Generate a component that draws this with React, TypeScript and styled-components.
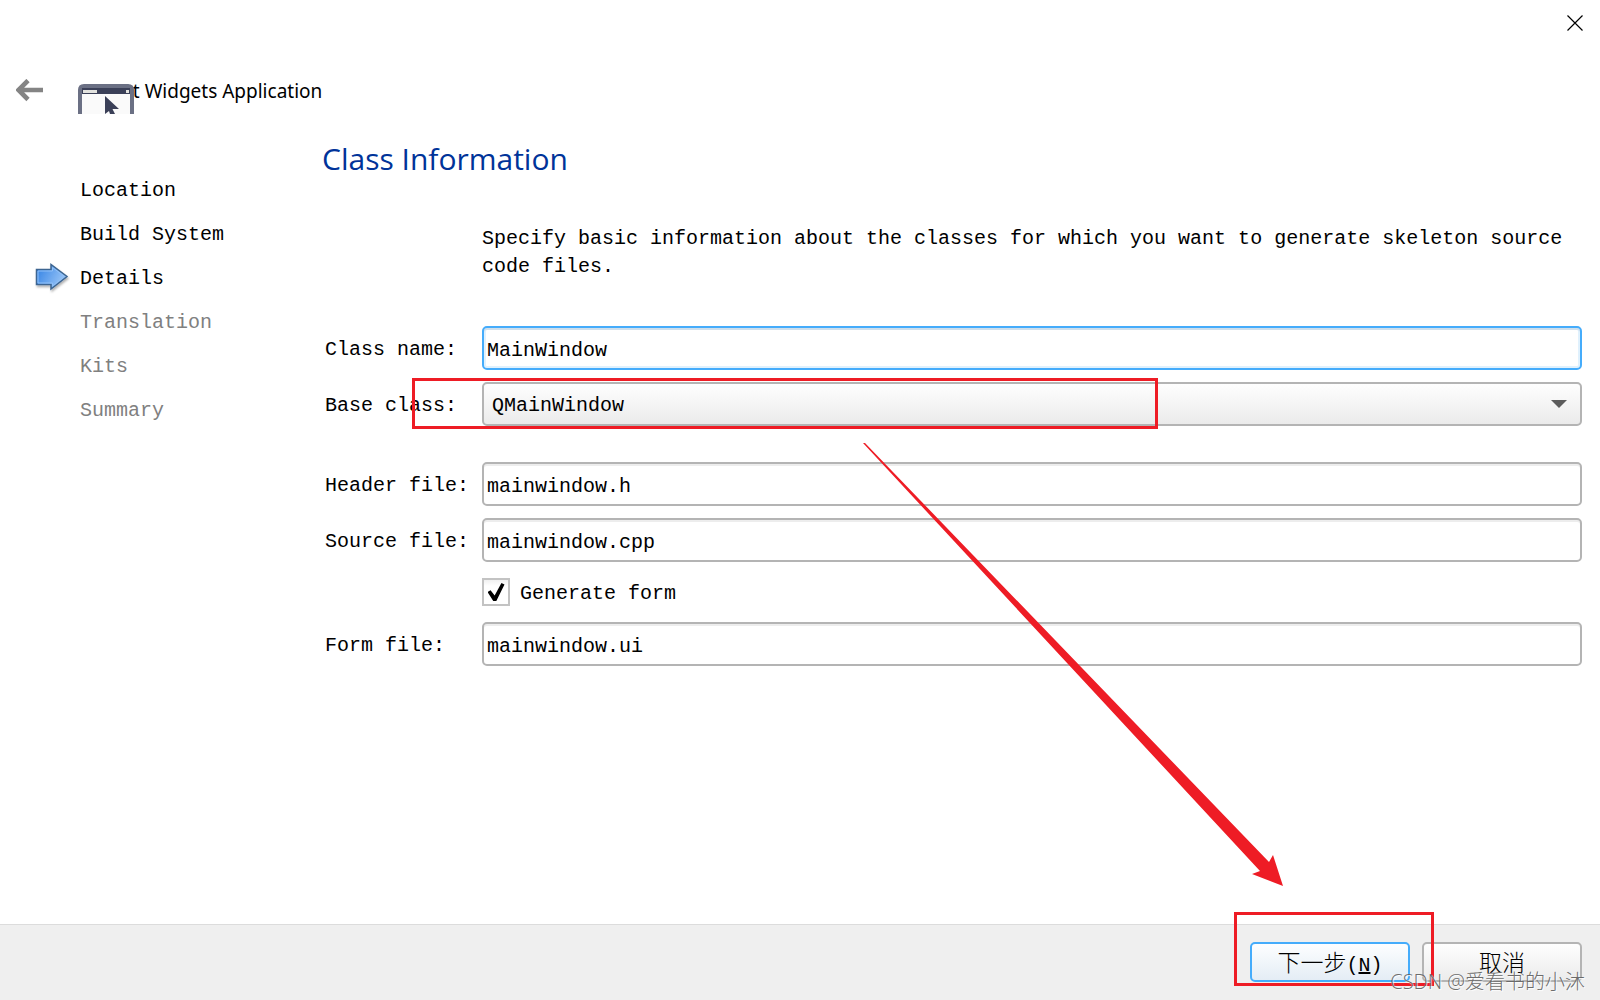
import React, { useState } from "react";
import styled, { createGlobalStyle } from "styled-components";

const mono = `"Liberation Mono", "Noto Sans CJK SC", monospace`;
const ui = `"Noto Sans", "Open Sans", sans-serif`;

const GlobalStyle = createGlobalStyle`
  *, *::before, *::after { box-sizing: border-box; }
  body { margin: 0; background: #fff; color: #000; }
`;

const Window = styled.div`
  position: relative;
  display: flex;
  flex-direction: column;
  min-height: 100vh;
  overflow: hidden;
  font: 20px/28px ${mono};
`;

const TitleBar = styled.div`
  display: flex;
  justify-content: flex-end;
  height: 65px;
  padding: 11px 11px;
`;

const IconButton = styled.button`
  display: flex;
  align-items: center;
  justify-content: center;
  width: 28px;
  height: 24px;
  padding: 0;
  border: 0;
  background: none;
`;

const Header = styled.header`
  display: flex;
  align-items: center;
  height: 52px;
  padding-left: 16px;
`;

const AppIcon = styled.svg`
  position: relative;
  z-index: 1;
  width: 56px;
  height: 30px;
  margin: 16px -16px 0 34px;
`;

const AppTitle = styled.span`
  font: 19px/28px ${ui};
`;

const Body = styled.div`
  display: flex;
  flex: 1;
`;

const Steps = styled.ol`
  flex: 0 0 322px;
  margin: 0;
  padding: 52px 0 0 34px;
  list-style: none;
`;

const Step = styled.li<{ $pending?: boolean }>`
  display: flex;
  align-items: center;
  gap: 10px;
  height: 44px;
  color: ${(p) => (p.$pending ? "#808080" : "#000")};
`;

const Marker = styled.span`
  display: flex;
  width: 36px;
  height: 32px;
`;

const Main = styled.main`
  flex: 1;
  min-width: 0;
  padding: 18px 18px 0 0;
`;

const Heading = styled.h1`
  margin: 0 0 42px;
  color: #003399;
  font: 400 30px/48px "Open Sans", sans-serif;
`;

const Intro = styled.p`
  margin: 0 0 45px;
  padding-left: 160px;
`;

const Fields = styled.form`
  display: grid;
  grid-template-columns: 157px 1fr;
  align-items: center;
  row-gap: 12px;
  padding-left: 3px;
`;

const Label = styled.label`
  padding-top: 3px;
  white-space: nowrap;
`;

const TextInput = styled.input<{ $active?: boolean }>`
  width: 100%;
  height: 44px;
  padding: 4px 3px 0;
  border: 2px solid ${(p) => (p.$active ? "#45acfb" : "#b4b4b4")};
  border-radius: 5px;
  outline: none;
  background: #fff;
  box-shadow: ${(p) =>
    p.$active ? "inset 0 2px #cfdfec, inset 0 0 0 2px #e0f1fd" : "inset 0 2px #ededed"};
  color: #000;
  font: 20px/28px ${mono};
`;

const SelectWrap = styled.div`
  position: relative;
  margin-bottom: 24px;
  &::after {
    content: "";
    position: absolute;
    top: 18px;
    right: 15px;
    border: 8px solid transparent;
    border-top-color: #5c5c5c;
    border-bottom: 0;
    pointer-events: none;
  }
`;

const Select = styled.select`
  display: block;
  width: 100%;
  height: 44px;
  padding: 4px 8px 0;
  appearance: none;
  border: 2px solid #b4b4b4;
  border-radius: 5px;
  background: linear-gradient(#fefefe, #ebebeb);
  color: #000;
  font: 20px/28px ${mono};
`;

const SelectLabel = styled(Label)`
  margin-bottom: 24px;
`;

const CheckRow = styled.div`
  grid-column: 2;
  display: flex;
  align-items: center;
  gap: 10px;
  height: 28px;
  margin: 4px 0;
`;

const CheckBox = styled.input`
  display: grid;
  place-items: center;
  width: 28px;
  height: 28px;
  margin: 0;
  appearance: none;
  border: 2px solid #c3c3c3;
  background: linear-gradient(#f0f0f0, #fff 6px);
  &:checked::before {
    content: "";
    width: 17px;
    height: 18px;
    background: #000;
    clip-path: polygon(0 50%, 18% 40%, 42% 70%, 82% 0, 100% 8%, 52% 100%, 34% 100%);
  }
`;

const Footer = styled.footer`
  display: flex;
  justify-content: flex-end;
  gap: 12px;
  height: 76px;
  padding: 17px 18px 0;
  border-top: 1px solid #dcdcdc;
  background: #efefef;
`;

const Button = styled.button<{ $primary?: boolean }>`
  width: 160px;
  height: 40px;
  padding: 0 0 2px;
  border: 2px solid ${(p) => (p.$primary ? "#45acfb" : "#b4b4b4")};
  border-radius: 5px;
  background: ${(p) =>
    p.$primary ? "linear-gradient(#fdfeff, #e4edf5)" : "linear-gradient(#fefefe, #ececec)"};
  color: #000;
  font: 300 23px/34px "Noto Sans CJK SC", sans-serif;
`;

const Shortcut = styled.span`
  font: 20px/28px ${mono};
`;

const Overlay = styled.div`
  position: absolute;
  inset: 0;
  z-index: 2;
  pointer-events: none;
`;

const FieldFrame = styled.div`
  position: absolute;
  top: 378px;
  left: 412px;
  width: 746px;
  height: 51px;
  border: 3px solid #ee1c25;
`;

const ButtonFrame = styled.div`
  position: absolute;
  right: 166px;
  bottom: 14px;
  width: 200px;
  height: 74px;
  border: 3px solid #ee1c25;
`;

const Arrow = styled.svg`
  position: absolute;
  top: 442px;
  left: 862px;
  width: 422px;
  height: 446px;
`;

const Watermark = styled.span`
  position: absolute;
  right: 15px;
  bottom: 3px;
  color: rgba(100, 100, 100, 0.95);
  font: 300 20px/30px "Open Sans", "Noto Sans CJK SC", sans-serif;
  text-shadow: 1px 1px 1px #fff;
  white-space: nowrap;
`;

const steps = [
  { name: "Location" },
  { name: "Build System" },
  { name: "Details", current: true },
  { name: "Translation", pending: true },
  { name: "Kits", pending: true },
  { name: "Summary", pending: true },
];

function CurrentArrow() {
  return (
    <svg width="36" height="32" viewBox="0 2 36 32" aria-hidden="true">
      <defs>
        <linearGradient id="stepFill" x1="0" y1="0.3" x2="1" y2="0.7">
          <stop offset="0" stopColor="#3a87e6" />
          <stop offset="1" stopColor="#a3cbf8" />
        </linearGradient>
        <filter id="stepShadow" x="-20%" y="-20%" width="140%" height="150%">
          <feDropShadow dx="1" dy="2" stdDeviation="1" floodColor="#000" floodOpacity="0.3" />
        </filter>
      </defs>
      <path
        d="M2.5 8.5H17V3.5L33 15.5L17 28V23.5H2.5Z"
        fill="url(#stepFill)"
        stroke="#3c6591"
        strokeWidth="1.5"
        filter="url(#stepShadow)"
      />
      <path d="M4 10H18.5V6.5L30.5 15.5L18.5 25V22H4Z" fill="none" stroke="#90c0f7" strokeWidth="1" />
    </svg>
  );
}

export default function App() {
  const [className, setClassName] = useState("MainWindow");
  const [header, setHeader] = useState("mainwindow.h");
  const [source, setSource] = useState("mainwindow.cpp");
  const [form, setForm] = useState("mainwindow.ui");
  const [generate, setGenerate] = useState(true);

  return (
    <Window>
      <GlobalStyle />
      <TitleBar>
        <IconButton type="button" aria-label="Close">
          <svg width="16" height="16" viewBox="0 0 16 16">
            <path d="M0.5 0.5L15.5 15.5M15.5 0.5L0.5 15.5" stroke="#000" strokeWidth="1.2" />
          </svg>
        </IconButton>
      </TitleBar>
      <Header>
        <IconButton type="button" aria-label="Back">
          <svg width="28" height="24" viewBox="0 1 28 24">
            <path d="M27 12H4M12 2.5L2.5 12L12 21.5" fill="none" stroke="#848484" strokeWidth="4.6" />
          </svg>
        </IconButton>
        <AppIcon viewBox="0 0 56 30" aria-hidden="true">
          <path d="M0 30V6Q0 0 6 0H50Q56 0 56 6V30Z" fill="#6b7084" />
          <path d="M4 30V5H52V30Z" fill="#fafafa" />
          <path d="M4 4H52V10H4Z" fill="#3b4058" />
          <path d="M5 6H19V9H5ZM48 6H51V9H48Z" fill="#e2e2de" />
          <path d="M27 12L41 25H34.5L37 30H32L31 27L27 30Z" fill="#3b4058" />
        </AppIcon>
        <AppTitle>Qt Widgets Application</AppTitle>
      </Header>
      <Body>
        <Steps>
          {steps.map((s) => (
            <Step key={s.name} $pending={s.pending} aria-current={s.current ? "step" : undefined}>
              <Marker>{s.current && <CurrentArrow />}</Marker>
              {s.name}
            </Step>
          ))}
        </Steps>
        <Main>
          <Heading>Class Information</Heading>
          <Intro>
            Specify basic information about the classes for which you want to generate skeleton
            source code files.
          </Intro>
          <Fields>
            <Label htmlFor="class-name">Class name:</Label>
            <TextInput
              id="class-name"
              $active
              value={className}
              onChange={(e) => setClassName(e.target.value)}
            />
            <SelectLabel htmlFor="base-class">Base class:</SelectLabel>
            <SelectWrap>
              <Select id="base-class" defaultValue="QMainWindow">
                <option>QMainWindow</option>
              </Select>
            </SelectWrap>
            <Label htmlFor="header-file">Header file:</Label>
            <TextInput id="header-file" value={header} onChange={(e) => setHeader(e.target.value)} />
            <Label htmlFor="source-file">Source file:</Label>
            <TextInput id="source-file" value={source} onChange={(e) => setSource(e.target.value)} />
            <CheckRow>
              <CheckBox
                id="generate-form"
                type="checkbox"
                checked={generate}
                onChange={(e) => setGenerate(e.target.checked)}
              />
              <Label htmlFor="generate-form">Generate form</Label>
            </CheckRow>
            <Label htmlFor="form-file">Form file:</Label>
            <TextInput id="form-file" value={form} onChange={(e) => setForm(e.target.value)} />
          </Fields>
        </Main>
      </Body>
      <Footer>
        <Button type="button" $primary>
          下一步
          <Shortcut>
            (<u>N</u>)
          </Shortcut>
        </Button>
        <Button type="button">取消</Button>
      </Footer>
      <Overlay>
        <FieldFrame />
        <ButtonFrame />
        <Arrow viewBox="862 442 422 446" aria-hidden="true">
          <path d="M863 443L865 443L1269 862L1273 855L1283 886L1252 874L1260 871Z" fill="#ee1c25" />
        </Arrow>
        <Watermark>CSDN @爱看书的小沐</Watermark>
      </Overlay>
    </Window>
  );
}
